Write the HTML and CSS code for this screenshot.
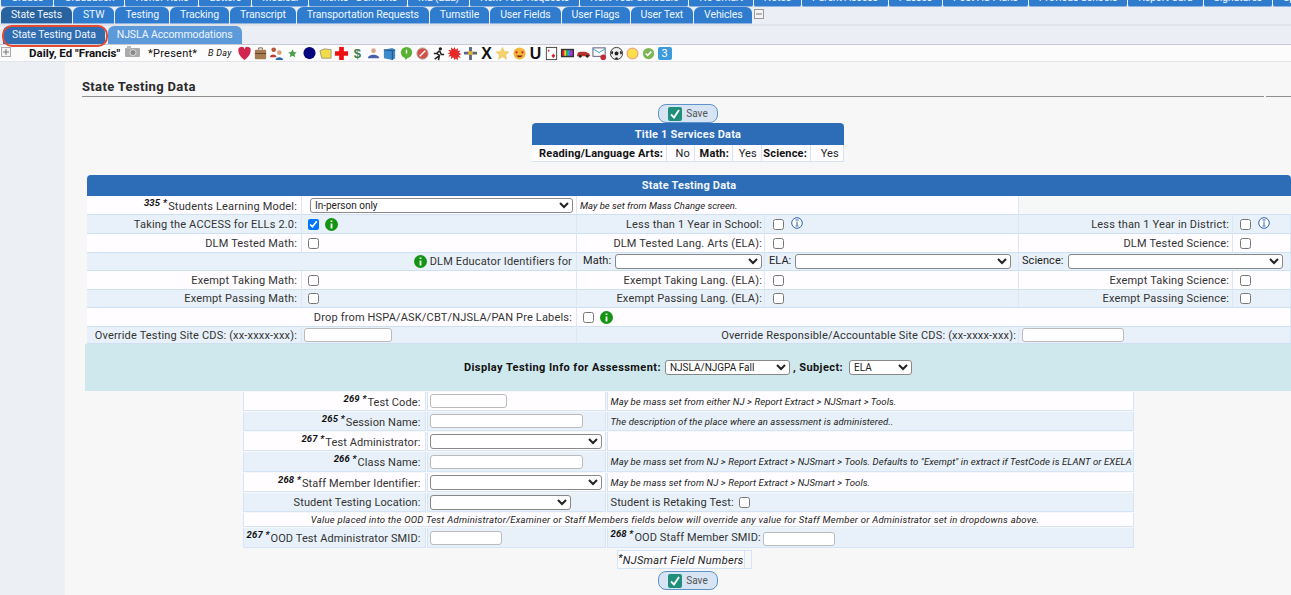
FILE: index.html
```html
<!DOCTYPE html>
<html lang="en">
<head>
<meta charset="utf-8">
<title>State Testing Data</title>
<link rel="stylesheet" href="styles.css">
</head>
<body>
<div class="page">
  <nav class="band">
    <div class="tabs tabs-clip">
      <a class="tab">Grades</a><a class="tab">Graduation</a><a class="tab">Honor Rolls</a><a class="tab">Letters</a><a class="tab">Medical</a><a class="tab">Merits - Demerits</a><a class="tab">ML (ELL)</a><a class="tab">Next Year Requests</a><a class="tab">Next Year Schedule</a><a class="tab">No Smart</a><a class="tab">Notes</a><a class="tab">Parent Access</a><a class="tab">Passes</a><a class="tab">Post HS Plans</a><a class="tab">Previous Schools</a><a class="tab">Report Card</a><a class="tab">Signatures</a><a class="tab">Special Ed</a>
    </div>
    <div class="tabs tabs-main">
      <a class="tab tab-active">State Tests</a><a class="tab">STW</a><a class="tab">Testing</a><a class="tab">Tracking</a><a class="tab">Transcript</a><a class="tab">Transportation Requests</a><a class="tab">Turnstile</a><a class="tab">User Fields</a><a class="tab">User Flags</a><a class="tab">User Text</a><a class="tab">Vehicles</a>
      <svg class="collapse" width="10" height="10" viewBox="0 0 10 10"><rect x=".5" y=".5" width="9" height="9" fill="#f4f4f4" stroke="#999"/><path d="M2 5h6" stroke="#777"/></svg>
    </div>
  </nav>
  <div class="subband">
    <a class="subtab subtab-active">State Testing Data</a><a class="subtab">NJSLA Accommodations</a>
  </div>
  <div class="student">
    <svg class="expand" width="10" height="10" viewBox="0 0 10 10"><rect x=".5" y=".5" width="9" height="9" fill="#f4f4f4" stroke="#aaa"/><path d="M2 5h6M5 2v6" stroke="#777"/></svg>
    <b class="student-name">Daily, Ed "Francis"</b>
    <svg class="camera" width="15" height="11" viewBox="0 0 15 11"><rect y="2" width="15" height="9" rx="1" fill="#aaa"/><rect x="2" width="4" height="3" fill="#bbb"/><circle cx="8" cy="6.500" r="3" fill="#888" stroke="#ddd"/></svg>
    <span class="present">*Present*</span>
    <i class="bday">B Day</i>
    <div class="flags">
      <svg viewBox="0 0 16 16"><path d="M8 15C3 11 1.500 8 1.500 5A3.300 3.300 0 0 1 8 3.500 3.300 3.300 0 0 1 14.500 5C14.500 8 13 11 8 15Z" fill="#d2254f"/></svg>
      <svg viewBox="0 0 16 16"><path d="M6 4V2h4v2" fill="none" stroke="#7b5b3a"/><rect x="2" y="4" width="12" height="10" rx="1" fill="#a57c52"/><path d="M2 8h12" stroke="#5e4227"/></svg>
      <svg viewBox="0 0 16 16"><circle cx="5" cy="4" r="2.500" fill="#b5573f"/><path d="M1 12c0-4 7-4 7 0z" fill="#c23b2e"/><circle cx="11" cy="7" r="2.500" fill="#d8a27f"/><path d="M7 15c0-4 8-4 8 0z" fill="#2a6ca8"/></svg>
      <svg viewBox="0 0 16 16"><path d="M8 3.500l1.400 3 3.100.3-2.300 2.100.7 3.100L8 10.400 5.100 12l.7-3.100-2.300-2.100 3.100-.3z" fill="#49a04a"/></svg>
      <svg viewBox="0 0 16 16"><circle cx="8" cy="7.500" r="6.500" fill="#03057f"/></svg>
      <svg viewBox="0 0 16 16"><path d="M2 5l5-2 7 1v9H4z" fill="#f1dc4a" stroke="#777" stroke-width=".7"/></svg>
      <svg viewBox="0 0 16 16"><path d="M5.500 1h5v4.500H15v5h-4.500V15h-5v-4.500H1v-5h4.500z" fill="#ee1111"/></svg>
      <svg viewBox="0 0 16 16"><text x="8" y="13" class="flag-text flag-dollar" text-anchor="middle">$</text></svg>
      <svg viewBox="0 0 16 16"><circle cx="8" cy="5" r="2.500" fill="#d7a788"/><path d="M2 13c0-5 12-5 12 0z" fill="#4a5fa8"/></svg>
      <svg viewBox="0 0 16 16"><path d="M2 4l9-2 3 2v9l-3 2-9-2z" fill="#3e8ac9"/><path d="M2 4l9 1v10M11 5l3-1" fill="none" stroke="#1d4f7c"/></svg>
      <svg viewBox="0 0 16 16"><circle cx="8" cy="7" r="6" fill="#58b135"/><path d="M6 12l1 3 3-3z" fill="#58b135"/><path d="M8 4v4" stroke="#fff" stroke-width="1.500"/></svg>
      <svg viewBox="0 0 16 16"><circle cx="8" cy="8" r="6" fill="#d64f45" stroke="#aaa"/><path d="M5 11l6-6" stroke="#fff" stroke-width="1.500"/></svg>
      <svg viewBox="0 0 16 16"><circle cx="10" cy="3" r="1.800" fill="#222"/><path d="M9 5L6 8l3 2-1 5M9 5l2 4h3M6 8H3M8 11l-4 3" fill="none" stroke="#222" stroke-width="1.600"/></svg>
      <svg viewBox="0 0 16 16"><path d="M8 1l1.300 3 2.500-2 -.4 3.200 3.200-.4-2 2.500 3 1.300-3 1.300 2 2.500-3.200-.4.400 3.200-2.500-2L8 15l-1.300-3-2.500 2 .4-3.200-3.200.4 2-2.500L.4 8l3-1.300-2-2.500 3.200.4L4.200 1.400l2.500 2z" fill="#e62a2a"/></svg>
      <svg viewBox="0 0 16 16"><path d="M6.500 1h3v5H15v3H9.500v6h-3V9H1V6h5.500z" fill="#5c6488"/><rect x="5.500" y="5.500" width="5" height="4" fill="#d9b53a"/></svg>
      <svg viewBox="0 0 16 16"><text x="8" y="14" class="flag-text flag-x" text-anchor="middle">X</text></svg>
      <svg viewBox="0 0 16 16"><path d="M8 1.500l2 4.300 4.700.5-3.500 3.200 1 4.600L8 11.300l-4.200 2.800 1-4.600L1.300 6.300 6 5.800z" fill="#f6d36a" stroke="#e3b23d" stroke-width=".5"/></svg>
      <svg viewBox="0 0 16 16"><circle cx="8" cy="8" r="6.500" fill="#f4b73b"/><path d="M4.800 8.200C3 6.800 3.300 5 4.800 5.600 6.300 5 6.600 6.800 4.800 8.200ZM11.200 8.200C9.400 6.800 9.700 5 11.200 5.600 12.700 5 13 6.800 11.200 8.200Z" fill="#d8262c"/><path d="M4.500 10c2 2.800 5 2.800 7 0z" fill="#7a2b18"/></svg>
      <svg viewBox="0 0 16 16"><text x="8" y="14" class="flag-text flag-u" text-anchor="middle">U</text></svg>
      <svg viewBox="0 0 16 16"><rect x="2.500" y="1.500" width="11" height="13" fill="#fff" stroke="#444"/><path d="M5 3.500l1 1.500-1 1.500-1-1.500zM10 8l2 2.500-2 2.500-2-2.500z" fill="#d8232a"/></svg>
      <svg viewBox="0 0 16 16"><rect x="1" y="3" width="14" height="9" fill="#333"/><path d="M2.500 4.500h2v6h-2z" fill="#e23"/><path d="M4.500 4.500h2v6h-2z" fill="#ec3"/><path d="M6.500 4.500h2v6h-2z" fill="#3b5"/><path d="M8.500 4.500h2v6h-2z" fill="#39e"/><path d="M10.500 4.500h3v6h-3z" fill="#a3c"/></svg>
      <svg viewBox="0 0 16 16"><path d="M1 10l1-3 3-1 5 0 4 2 1 2v1H1z" fill="#b5322c"/><circle cx="4.500" cy="11" r="1.500" fill="#222"/><circle cx="12" cy="11" r="1.500" fill="#222"/></svg>
      <svg viewBox="0 0 16 16"><rect x="1" y="2" width="13" height="9" fill="#fff" stroke="#557"/><path d="M1 3l6.500 4L14 3" fill="none" stroke="#39c"/><circle cx="12" cy="12" r="3" fill="#c2273a"/></svg>
      <svg viewBox="0 0 16 16"><circle cx="8" cy="8" r="6.500" fill="#eee" stroke="#333"/><path d="M8 5.500l2.300 1.700-.9 2.700H6.600l-.9-2.700zM3 5l1.500 1-.8 3L2 8zM13 5l-1.500 1 .8 3L14 8zM6 13l2-1 2 1-2 1.500z" fill="#222"/></svg>
      <svg viewBox="0 0 16 16"><circle cx="8" cy="8" r="5.800" fill="#fbe04a" stroke="#eda57f" stroke-width="1.300"/></svg>
      <svg viewBox="0 0 16 16"><circle cx="8" cy="8" r="6" fill="#7cb652"/><path d="M5 8l2 2 4-4" fill="none" stroke="#fff" stroke-width="1.600"/></svg>
      <span class="flag-three">3</span>
    </div>
  </div>
  <div class="workspace">
    <aside class="rail"></aside>
    <main class="content">
      <h1 class="page-title"><span class="page-title-a">State Testing Data</span><span class="page-title-b"></span></h1>
      <button class="save" type="button"><svg width="14" height="14" viewBox="0 0 14 14"><rect width="14" height="14" rx="2" fill="#1f8f7c"/><path d="M3 7.500l3 3 5-7.500" fill="none" stroke="#fff" stroke-width="1.800"/></svg>Save</button>
      <table class="title1">
        <colgroup><col class="t1-a"><col class="t1-b"><col class="t1-c"><col class="t1-d"><col class="t1-e"><col class="t1-f"></colgroup>
        <tr><th colspan="6" class="head title1-head">Title 1 Services Data</th></tr>
        <tr>
          <td class="t1-l">Reading/Language Arts:</td><td class="t1-v">No</td>
          <td class="t1-l">Math:</td><td class="t1-v">Yes</td>
          <td class="t1-l">Science:</td><td class="t1-v">Yes</td>
        </tr>
      </table>

      <table class="state">
        <colgroup><col class="c1"><col class="c2"><col class="c3"><col class="c4"><col class="c5"><col class="c6"></colgroup>
        <tr class="r-head"><th colspan="6" class="head">State Testing Data</th></tr>
        <tr class="r19"><td class="lab lab-sup"><sup class="fn">335 *</sup>Students Learning Model:</td><td class="val"><select class="sel sel-wide"><option>In-person only</option></select></td><td colspan="2" class="note note-pad">May be set from Mass Change screen.</td><td colspan="2" class="blank"></td></tr>
        <tr class="r19 alt"><td class="lab">Taking the ACCESS for ELLs 2.0:</td><td class="val"><input type="checkbox" checked><svg class="info" width="13" height="13" viewBox="0 0 13 13"><circle cx="6.500" cy="6.500" r="6.500" fill="#139413"/><path d="M6.500 2.500v1.500M6.500 5.500v5" stroke="#fff" stroke-width="1.800"/></svg></td><td class="lab">Less than 1 Year in School:</td><td class="val"><input type="checkbox"><svg class="info-blue" width="12" height="12" viewBox="0 0 12 12"><circle cx="6" cy="6" r="5.300" fill="#fff" stroke="#2c62b0"/><path d="M4.500 3h3M6 4.500v4M4.500 9h3" stroke="#2c62b0"/></svg></td><td class="lab">Less than 1 Year in District:</td><td class="val"><input type="checkbox"><svg class="info-blue" width="12" height="12" viewBox="0 0 12 12"><circle cx="6" cy="6" r="5.300" fill="#fff" stroke="#2c62b0"/><path d="M4.500 3h3M6 4.500v4M4.500 9h3" stroke="#2c62b0"/></svg></td></tr>
        <tr class="r19"><td class="lab">DLM Tested Math:</td><td class="val"><input type="checkbox"></td><td class="lab">DLM Tested Lang. Arts (ELA):</td><td class="val"><input type="checkbox"></td><td class="lab">DLM Tested Science:</td><td class="val"><input type="checkbox"></td></tr>
        <tr class="r18 alt"><td colspan="2" class="lab lab-wide"><svg class="info-before" width="13" height="13" viewBox="0 0 13 13"><circle cx="6.500" cy="6.500" r="6.500" fill="#139413"/><path d="M6.500 2.500v1.500M6.500 5.500v5" stroke="#fff" stroke-width="1.800"/></svg>DLM Educator Identifiers for</td><td class="math">Math:<select class="sel sel-math"><option></option></select></td><td class="ela">ELA:<select class="sel sel-ela"><option></option></select></td><td colspan="2" class="sci">Science:<select class="sel sel-sci"><option></option></select></td></tr>
        <tr class="r19"><td class="lab">Exempt Taking Math:</td><td class="val"><input type="checkbox"></td><td class="lab">Exempt Taking Lang. (ELA):</td><td class="val"><input type="checkbox"></td><td class="lab">Exempt Taking Science:</td><td class="val"><input type="checkbox"></td></tr>
        <tr class="r18 alt"><td class="lab">Exempt Passing Math:</td><td class="val"><input type="checkbox"></td><td class="lab">Exempt Passing Lang. (ELA):</td><td class="val"><input type="checkbox"></td><td class="lab">Exempt Passing Science:</td><td class="val"><input type="checkbox"></td></tr>
        <tr class="r19"><td colspan="2" class="lab lab-wide">Drop from HSPA/ASK/CBT/NJSLA/PAN Pre Labels:</td><td colspan="4" class="val val-drop"><input type="checkbox"><svg class="info" width="13" height="13" viewBox="0 0 13 13"><circle cx="6.500" cy="6.500" r="6.500" fill="#139413"/><path d="M6.500 2.500v1.500M6.500 5.500v5" stroke="#fff" stroke-width="1.800"/></svg></td></tr>
        <tr class="r17 alt"><td class="lab">Override Testing Site CDS: (xx-xxxx-xxx):</td><td class="val"><input class="txt txt-cds" type="text"></td><td colspan="2" class="lab lab-wide">Override Responsible/Accountable Site CDS: (xx-xxxx-xxx):</td><td colspan="2" class="val"><input class="txt txt-cds2" type="text"></td></tr>
      </table>

      <div class="assess">
        <b class="assess-label">Display Testing Info for Assessment:</b>
        <select class="sel sel-assess"><option>NJSLA/NJGPA Fall</option></select>
        <b class="assess-label">, Subject:</b>
        <select class="sel sel-subj"><option>ELA</option></select>
      </div>

      <table class="tests">
        <colgroup><col class="t-c1"><col class="t-c2"><col class="t-c3"></colgroup>
        <tr class="h19"><td class="lab lab-sup"><sup class="fn">269 *</sup>Test Code:</td><td class="val"><input class="txt txt-code" type="text"></td><td class="note">May be mass set from either NJ &gt; Report Extract &gt; NJSmart &gt; Tools.</td></tr>
        <tr class="h19 alt"><td class="lab lab-sup"><sup class="fn">265 *</sup>Session Name:</td><td class="val"><input class="txt txt-name" type="text"></td><td class="note">The description of the place where an assessment is administered..</td></tr>
        <tr class="h19"><td class="lab lab-sup"><sup class="fn">267 *</sup>Test Administrator:</td><td class="val"><select class="sel sel-staff"><option></option></select></td><td class="note"></td></tr>
        <tr class="h20 alt"><td class="lab lab-sup"><sup class="fn">266 *</sup>Class Name:</td><td class="val"><input class="txt txt-name" type="text"></td><td class="note">May be mass set from NJ &gt; Report Extract &gt; NJSmart &gt; Tools. Defaults to "Exempt" in extract if TestCode is ELANT or EXELA</td></tr>
        <tr class="h19"><td class="lab lab-sup"><sup class="fn">268 *</sup>Staff Member Identifier:</td><td class="val"><select class="sel sel-staff"><option></option></select></td><td class="note">May be mass set from NJ &gt; Report Extract &gt; NJSmart &gt; Tools.</td></tr>
        <tr class="h19 alt"><td class="lab">Student Testing Location:</td><td class="val"><select class="sel sel-loc"><option></option></select></td><td class="plain">Student is Retaking Test: <input type="checkbox"></td></tr>
        <tr class="h13"><td colspan="3" class="note note-center">Value placed into the OOD Test Administrator/Examiner or Staff Members fields below will override any value for Staff Member or Administrator set in dropdowns above.</td></tr>
        <tr class="h20 alt"><td class="lab lab-sup"><sup class="fn">267 *</sup>OOD Test Administrator SMID:</td><td class="val"><input class="txt txt-smid" type="text"></td><td class="plain lab-sup"><sup class="fn">268 *</sup>OOD Staff Member SMID:<input class="txt txt-smid2" type="text"></td></tr>
      </table>

      <div class="legend"><span class="legend-text"><sup class="fn-star">*</sup>NJSmart Field Numbers</span><span class="legend-end"></span></div>
      <button class="save save-bottom" type="button"><svg width="14" height="14" viewBox="0 0 14 14"><rect width="14" height="14" rx="2" fill="#1f8f7c"/><path d="M3 7.500l3 3 5-7.500" fill="none" stroke="#fff" stroke-width="1.800"/></svg>Save</button>
    </main>
  </div>
</div>
</body>
</html>
```

FILE: styles.css
```css
html, body { margin: 0; padding: 0; height: 595px; overflow: hidden; }
body { font-family: Roboto, "Liberation Sans", sans-serif; font-size: 11px; color: #222; background: #f7f7f7; }
.page { width: 1291px; height: 595px; overflow: hidden; display: flex; flex-direction: column; }

.band { background: #ebeef4; border-bottom: 2px solid #e2e3e8; height: 24px; flex: none; overflow: hidden; }
.tabs { display: flex; white-space: nowrap; padding-left: 1px; gap: 1px; }
.tabs-clip { height: 7px; align-items: flex-end; overflow: hidden; }
.tabs-clip .tab { height: 16px; line-height: 13px; border-radius: 0 0 2px 2px; }
.tabs-main { height: 17px; }
.tab { flex: none; background: #2f7bce; color: #eef5fc; font-size: 10.500px; padding: 0 10px; height: 17px; line-height: 16px; letter-spacing: -.13px; border-radius: 6px 6px 0 0; border-bottom: 1px solid #8fb4dd; box-sizing: border-box; }
.tab-active { background: #29639f; }
.collapse { margin: 2px 0 0 1px; flex: none; }

.subband { height: 18px; flex: none; background: #ebeef4; border-bottom: 1px solid #c8cad2; display: flex; gap: 3px; padding-left: 3px; align-items: flex-end; }
.subtab { height: 18px; line-height: 17px; padding: 0 9px; font-size: 10.500px; background: #5d9ad9; color: #eef5fc; letter-spacing: -.1px; border-radius: 6px 6px 0 0; }
.subtab-active { position: relative; z-index: 1; background: #2f6cb0; }
.subtab-active::after { content: ""; position: absolute; left: -1px; top: -1px; right: -3px; bottom: -3px; border: 2.500px solid #e34a33; border-radius: 10px; }

.student { height: 16px; flex: none; background: #fdfcfd; border-bottom: 1px solid #e4e4ea; display: flex; align-items: center; }
.expand { margin: 0 0 3px 1px; flex: none; }
.student-name { margin-left: 18px; color: #111; font-size: 11.500px; width: 96px; white-space: nowrap; }
.camera { margin: 0 0 3px 0; flex: none; }
.present { margin-left: 8px; color: #111; letter-spacing: .25px; width: 60px; white-space: nowrap; }
.bday { font-size: 9px; color: #111; letter-spacing: .3px; width: 28.400px; white-space: nowrap; }
.flags { display: grid; grid-auto-flow: column; grid-auto-columns: 16.170px; align-items: center; justify-items: center; }
.flags svg { width: 15px; height: 15px; display: block; }
.flag-text { font-family: "Liberation Sans", sans-serif; font-weight: 700; }
.flag-dollar { font-size: 14px; fill: #3e7c4d; }
.flag-x { font-size: 17px; fill: #111; }
.flag-u { font-size: 17px; fill: #111; }
.flag-three { width: 14px; height: 13px; background: #3d9bdc; color: #fff; font-size: 11px; line-height: 13px; text-align: center; border-radius: 2px; }

.workspace { flex: 1; display: flex; min-height: 0; }
.rail { width: 65px; flex: none; background: #ecf0f4; border-right: 1px solid #f0f0f2; box-sizing: border-box; }
.content { flex: 1; min-width: 0; padding: 18px 0 0 20px; overflow: hidden; display: flex; flex-direction: column; align-items: center; }

.page-title { align-self: flex-start; display: flex; margin: 0 0 7px -3px; font-size: 13px; line-height: 14px; font-weight: 700; color: #2b2b2b; letter-spacing: .35px; width: 1209px; }
.page-title-a { width: 1182px; flex: none; padding-bottom: 2px; border-bottom: 1px solid #8f8f8f; }
.page-title-b { flex: 1; border-bottom: 1px solid #8f8f8f; margin-left: 2px; }

.save { display: flex; align-items: center; gap: 4px; justify-content: center; width: 60px; height: 19px; padding: 0; flex: none; border: 1px solid #5e93c9; border-radius: 8px; background: #d6e4f3; color: #555; font: 10px Roboto, sans-serif; }

table { border-spacing: 0; border-collapse: separate; table-layout: fixed; flex: none; }
td, th { padding: 0; box-sizing: border-box; white-space: nowrap; overflow: hidden; }
.head { background: #2d6db8; color: #f3f7fc; font-weight: 700; font-size: 11px; letter-spacing: .2px; text-align: center; border-radius: 4px 4px 0 0; }

.title1 { width: 312px; background: #fffdff; }
.title1-head { height: 22px; }
.title1 td { height: 17px; border: 1px solid #d5e4f4; border-width: 0 1px 1px 0; }
.t1-l { font-weight: 700; color: #111; text-align: right; padding-right: 3px; letter-spacing: .18px; }
.t1-v { text-align: right; padding-right: 4px; letter-spacing: .2px; }
.t1-a { width: 135px; }
.t1-b { width: 28px; }
.t1-c { width: 38px; }
.t1-d { width: 29px; }
.t1-e { width: 49px; }
.t1-f { width: 33px; }

.state { width: 1204px; margin: 13px 0 0 2px; align-self: flex-start; }
.c1 { width: 215px; } .c2 { width: 275px; } .c3 { width: 188px; } .c4 { width: 254px; } .c5 { width: 214px; } .c6 { width: 58px; }
.r-head .head { height: 21px; }
.r19 > td { height: 19px; }
.r18 > td { height: 18px; }
.r17 > td { height: 17px; }
.state td { background: #fffdff; border-bottom: 1px solid #cfe0f2; border-right: 1px solid #dbe7f4; letter-spacing: .17px; }
.state .alt td { background: #e8f1f9; }
.state td.blank { background: #f6f7f7; border-right: 0; }
.lab { text-align: right; padding-right: 4px; color: #333; }
.state td.lab:nth-child(3) { padding-right: 2px; }
.state td.lab:nth-child(5) { padding-right: 3px; }
.lab-sup { padding-top: 2px; }
.val { padding-left: 6px; }
.state td.val:nth-child(4) { padding-left: 8px; }
.state td.val:nth-child(6) { padding-left: 7px; }
.math { padding-left: 6px; }
.ela { padding-left: 4px; }
.sci { padding-left: 3px; }
.state td.math, .state td.ela, .state td.sci { letter-spacing: .05px; }
.note { font-size: 9.500px; font-style: italic; color: #222; padding-left: 3px; }
.state td.note-pad { letter-spacing: 0; }
.fn { font-size: 9.500px; font-weight: 700; font-style: italic; line-height: 0; vertical-align: 4px; margin-right: 1px; color: #111; }
.fn-star { font-size: 9.500px; font-weight: 700; line-height: 0; vertical-align: 3px; }

input[type="checkbox"] { width: 11px; height: 11px; margin: 0; vertical-align: -2px; }
.info { margin-left: 6px; vertical-align: -3px; }
.info-blue { margin-left: 7px; vertical-align: -1px; }
.info-before { margin-right: 3px; vertical-align: -3px; }

.sel { height: 15px; box-sizing: border-box; padding: 0; font: 10px Roboto, sans-serif; color: #222; background: #fff; border: 1px solid #888; border-radius: 3px; vertical-align: middle; }
.sel-wide { width: 263px; margin-left: 2px; }
.sel-math { width: 147px; margin-left: 4px; }
.sel-ela { width: 216px; margin-left: 4px; }
.sel-sci { width: 215px; margin-left: 4px; }
.txt { box-sizing: border-box; height: 14px; border: 1px solid #bbb; border-radius: 3px; background: #fff; padding: 0; vertical-align: middle; margin: 0; }
.txt-cds { width: 88px; margin-left: -4px; }
.txt-cds2 { width: 102px; margin-left: -5px; }

.assess { align-self: flex-start; width: 1206px; height: 47px; flex: none; background: #cfe8ed; display: flex; align-items: center; justify-content: center; gap: 3px; box-sizing: border-box; }
.assess-label { color: #111; letter-spacing: .42px; font-size: 11px; }
.sel-assess { width: 125px; margin-left: 1px; }
.sel-subj { width: 63px; margin-left: 3px; }

.tests { width: 893px; border-spacing: 1px; }
.t-c1 { width: 183px; } .t-c2 { width: 179px; } .t-c3 { width: 527px; }
.tests td { background: #fffdff; border: 1px solid #d6e5f5; border-width: 0 1px 1px 1px; letter-spacing: .1px; }
.tests .alt td { background: #e8f1f9; }
.tests .lab { padding-right: 4px; }
.tests .val { padding-left: 2px; }
.h19 td { height: 19px; }
.h20 td { height: 20px; }
.h13 td { height: 14px; }
.plain { padding-left: 3px; color: #333; }
.plain input[type="checkbox"] { margin-left: 2px; }
.tests .note { padding-left: 3px; letter-spacing: .1px; }
.tests .note-center { padding: 0 26px 0 0; text-align: center; letter-spacing: .24px; }
.sel-staff { width: 172px; }
.sel-loc { width: 141px; }
.txt-code { width: 77px; }
.txt-name { width: 153px; }
.txt-smid { width: 72px; }
.txt-smid2 { width: 72px; margin-left: 2px; }

.legend { display: flex; flex: none; height: 19px; margin: 1px 0 2px -7px; }
.legend-text { width: 128px; border: 1px solid #d6e5f5; background: #fbfbfd; font-style: italic; font-size: 11px; letter-spacing: .32px; line-height: 19px; text-align: center; box-sizing: border-box; }
.legend-end { width: 7px; border: 1px solid #d6e5f5; border-left: 0; box-sizing: border-box; }
```
